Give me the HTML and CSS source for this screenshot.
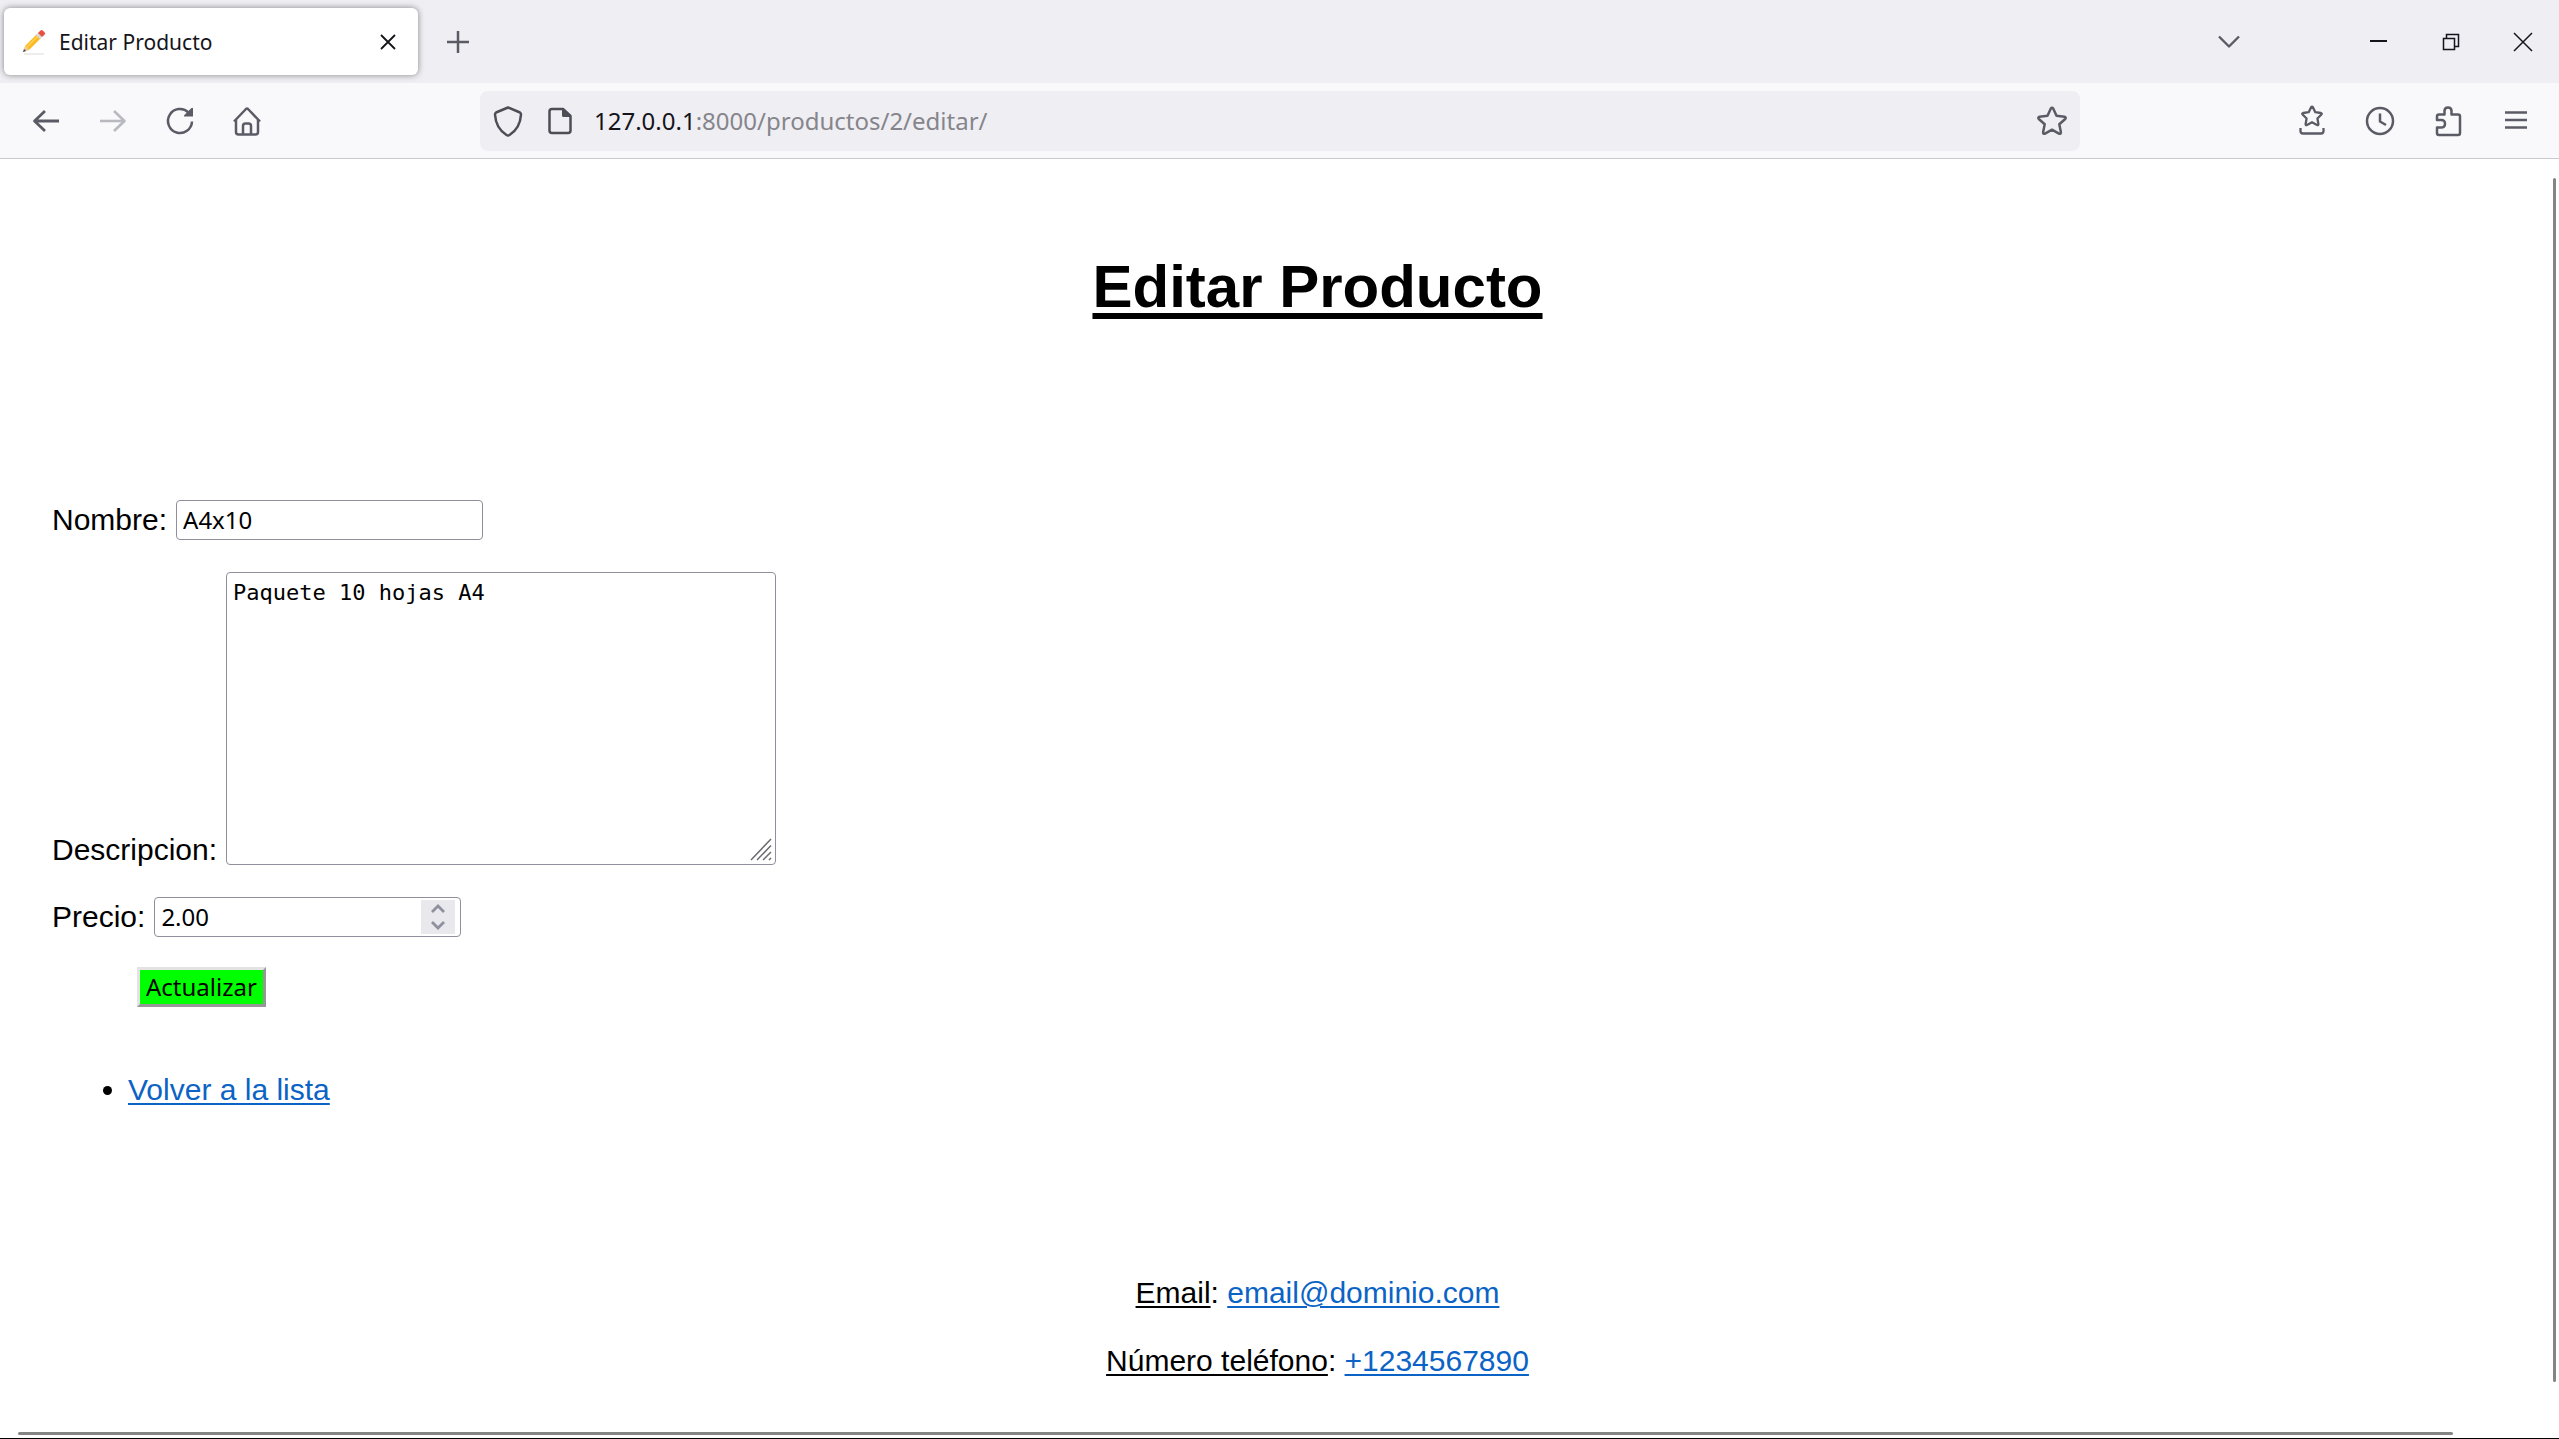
FILE: index.html
```html
<!DOCTYPE html>
<html lang="es">
<head>
<meta charset="utf-8">
<title>Editar Producto</title>
<link rel="stylesheet" href="styles.css">
</head>
<body>
<header class="browser">
  <div class="tabstrip">
    <div class="tab">
      <svg class="favicon" width="24" height="26" viewBox="0 0 24 26">
        <path d="M2 25h20" stroke="#dcdcdc" stroke-width="1"/>
        <path d="M1 23 3 17 7 21z" fill="#e9c79a"/>
        <path d="M1 23l1-3 2 2z" fill="#444"/>
        <path d="M3 17 15 5l4 4L7 21z" fill="#fdb922"/>
        <path d="M4.500 18.500 16.500 6.500" stroke="#ffd45c" stroke-width="1.500"/>
        <path d="M14 6l3-3 4 4-3 3z" fill="#d5dbe0"/>
        <path d="M16 4l2.500-2.500q1-1 2.200 0l2 2q1 1.200 0 2L20 8z" fill="#e8503f"/>
      </svg>
      <span class="tab-title">Editar Producto</span>
      <button class="tab-close" aria-label="Cerrar pestaña"><svg width="16" height="16" viewBox="0 0 16 16"><path d="M1 1l14 14M15 1 1 15" stroke="#15141a" stroke-width="1.800"/></svg></button>
    </div>
    <button class="new-tab" aria-label="Nueva pestaña"><svg class="icon" viewBox="0 0 32 32"><path d="M16 5v22M5 16h22" stroke-width="2.500"/></svg></button>
    <div class="window-controls">
      <button class="list-tabs" aria-label="Listar pestañas"><svg class="icon" viewBox="0 0 32 32"><path d="M6 10.500l10 10 10-10" stroke-width="2.400"/></svg></button>
      <button class="win-button" aria-label="Minimizar"><svg class="icon" viewBox="0 0 32 32"><path d="M7 15h17" stroke-width="2"/></svg></button>
      <button class="win-button" aria-label="Restaurar"><svg class="icon" viewBox="0 0 32 32"><path d="M8.500 12.500h11v11h-11zM11.500 12V8.500h12v12H20" stroke-width="1.500" stroke-linecap="butt" stroke-linejoin="miter"/></svg></button>
      <button class="win-button" aria-label="Cerrar"><svg class="icon" viewBox="0 0 32 32"><path d="M7 7l18 18M25 7 7 25" stroke-width="1.500"/></svg></button>
    </div>
  </div>
  <nav class="toolbar">
    <button class="nav-tool" aria-label="Atrás"><svg class="icon" viewBox="0 0 32 32"><path d="M29 16H4.500M15 6 4.500 16 15 26" stroke-width="2.800"/></svg></button>
    <button class="nav-tool forward" aria-label="Adelante"><svg class="icon" viewBox="0 0 32 32"><path d="M3 16h24.500M17 6l10.500 10L17 26" stroke-width="2.600"/></svg></button>
    <button class="nav-tool" aria-label="Recargar"><svg class="icon" viewBox="0 0 32 32"><path d="M24.500 7.500A12 12 0 1 0 28 16.500"/><path class="solid" d="M29 3.200v8.300h-8.800q-.8-.5 0-1.300l7-7q1.200-.9 1.800 0z"/></svg></button>
    <button class="nav-tool" aria-label="Inicio"><svg class="icon" viewBox="0 0 32 32"><path d="M3 16.500 15 4q1-.9 2 0l12 12.500M5 15v12q0 2.500 2.500 2.500h17q2.500 0 2.500-2.500V15M12 29.500V21q0-2.500 2.500-2.500h3q2.500 0 2.500 2.500v8.500"/></svg></button>
    <div class="urlbar">
      <svg class="icon" viewBox="0 0 32 32"><path d="M16 2.500 28 7.500q1 .5 1 2C28.500 18 25.500 25 17.500 30q-1.500.9-3 0C6.500 25 3.500 18 3 9.500q0-1.500 1-2z"/></svg>
      <svg class="icon" viewBox="0 0 32 32"><path d="M19 4H8q-2.500 0-2.500 2.500v19Q5.500 28 8 28h16q2.500 0 2.500-2.500V11z"/><path class="solid" d="M18 4v6.500q0 1.500 1.500 1.500H27v-1.500L20 4z"/></svg>
      <span class="url"><span class="host">127.0.0.1</span>:8000/productos/2/editar/</span>
      <button class="bookmark" aria-label="Añadir a marcadores"><svg class="icon" viewBox="0 0 32 32"><path d="M14.700 3.800q1.300-1.900 2.600 0l3.200 7 8 1q2 .6.700 2.200l-5.900 5.300 1.600 7.900q0 2.200-2 1.400L16 24.700l-6.900 3.900q-2 .8-2-1.400l1.600-7.900L2.800 14q-1.300-1.600.7-2.200l8-1z"/></svg></button>
    </div>
    <button class="tool" aria-label="Marcadores"><svg class="icon" viewBox="0 0 32 32"><path d="M15.100 2.200q.9-1.300 1.800 0l2.400 5 5.600.8q1.400.4.500 1.500l-4 4 1 5.400q0 1.600-1.400 1L16 17.200l-5 2.700q-1.400.6-1.400-1l1-5.400-4-4q-.9-1.100.5-1.500l5.600-.8zM4.500 23v3q0 2.500 2.500 2.500h18q2.500 0 2.500-2.500v-3" stroke-width="2.300"/></svg></button>
    <button class="tool" aria-label="Historial"><svg class="icon" viewBox="0 0 32 32"><circle cx="16" cy="16" r="13"/><path d="M16 8.500v8l6 3.500"/></svg></button>
    <button class="tool" aria-label="Extensiones"><svg class="icon" viewBox="0 0 32 32"><path d="M12.500 9.500V6q0-3.500 3.500-3.500T19.500 6v3.500H26q2 0 2 2V28q0 2-2 2H7q-2 0-2-2v-5.500h4q4 0 4-3.800T9 15H5v-3.500q0-2 2-2z"/></svg></button>
    <button class="tool" aria-label="Menú"><svg class="icon" viewBox="0 0 32 32"><path d="M5 7.500h22M5 15h22M5 22.500h22"/></svg></button>
  </nav>
</header>
<div class="viewport">
  <div class="page">
    <h1>Editar Producto</h1>
    <form class="product-form">
      <div class="field">
        <label for="nombre">Nombre:</label>
        <input class="text-input" id="nombre" type="text" value="A4x10">
      </div>
      <div class="field field-tall">
        <label for="descripcion">Descripcion:</label>
        <div class="control">
          <textarea id="descripcion">Paquete 10 hojas A4</textarea>
          <svg class="grip" width="22" height="23" viewBox="0 0 22 23"><path d="M1 22 21 1M7 22 21 7.500M13 22l8-8M19 22l2-2" stroke="#6b6b70" stroke-width="1.500"/></svg>
        </div>
      </div>
      <div class="field">
        <label for="precio">Precio:</label>
        <div class="control">
          <input class="text-input" id="precio" type="number" step="0.01" value="2.00">
          <svg class="spinner" width="34" height="34" viewBox="0 0 34 34"><path d="M11 12l6-6 6 6M11 22l6 6 6-6" fill="none" stroke="#8f8f9d" stroke-width="2.800"/></svg>
        </div>
      </div>
      <button class="submit" type="submit">Actualizar</button>
    </form>
    <ul class="links"><li><a href="#lista">Volver a la lista</a></li></ul>
    <footer class="contact">
      <p><u>Email</u>: <a href="mailto:email@dominio.com">email@dominio.com</a></p>
      <p><u>Número teléfono</u>: <a href="tel:+1234567890">+1234567890</a></p>
    </footer>
  </div>
  <div class="scroll-y"></div>
  <div class="scroll-x"></div>
</div>
</body>
</html>
```
FILE: styles.css
```css
* { box-sizing: border-box; }

body {
  margin: 0;
  min-height: 100vh;
  display: flex;
  flex-direction: column;
  overflow: hidden;
  background: #fff;
  color: #000;
  font: 30px/34px "Liberation Sans", Arial, sans-serif;
}

/* Browser window */
.browser {
  font-family: "Noto Sans", "Segoe UI", sans-serif;
  color: #15141a;
  border-bottom: 1px solid #c9c9ce;
}
.browser button {
  display: flex;
  align-items: center;
  justify-content: center;
  padding: 0;
  border: 0;
  background: none;
  color: #5b5b66;
}
.icon {
  flex: none;
  width: 32px;
  height: 32px;
  fill: none;
  stroke: currentColor;
  stroke-width: 2.5;
  stroke-linejoin: round;
}
.icon .solid { fill: currentColor; stroke: none; }

.tabstrip {
  display: flex;
  align-items: center;
  height: 83px;
  padding-left: 4px;
  background: #efeef3;
}
.tab {
  display: flex;
  align-items: center;
  width: 414px;
  height: 67px;
  padding: 0 22px 0 18px;
  border-radius: 6px;
  background: #fff;
  box-shadow: 0 0 6px rgba(0, 0, 0, 0.45);
}
.tab-title { flex: 1; margin-left: 13px; font-size: 21px; }
.browser .new-tab { width: 80px; height: 60px; }
.window-controls { display: flex; margin-left: auto; }
.browser .list-tabs { width: 60px; height: 60px; margin-right: 84px; }
.browser .win-button { width: 72px; height: 60px; color: #15141a; }

.toolbar {
  display: flex;
  align-items: center;
  height: 75px;
  padding: 0 9px 0 12px;
  background: #f9f9fb;
}
.browser .nav-tool { width: 67px; height: 60px; }
.browser .tool { width: 68px; height: 60px; }
.browser .forward { color: #b9b9c0; }
.urlbar {
  flex: 1;
  display: flex;
  align-items: center;
  gap: 20px;
  height: 60px;
  margin: 0 198px 0 200px;
  padding: 0 12px;
  border-radius: 8px;
  background: #efeef3;
  color: #4d4d55;
}
.url { flex: 1; margin-left: -2px; font-size: 24px; color: #85858b; }
.host { color: #15141a; }

/* Page shown in the window */
.viewport {
  flex: 1;
  position: relative;
  overflow: hidden;
  border-bottom: 1px solid #000;
}
.page { margin-right: -24px; padding: 94px 0 0 52px; }

h1 {
  margin: 0 0 179px;
  font-size: 60px;
  line-height: 68px;
  text-align: center;
  text-decoration: underline 6px;
  text-underline-offset: 6px;
}

.product-form {
  display: flex;
  flex-direction: column;
  align-items: flex-start;
  gap: 30px;
}
.field { display: flex; align-items: center; gap: 9px; }
.field-tall { align-items: flex-end; }
.control { position: relative; display: flex; }

.text-input, textarea {
  margin: 0;
  border: 1px solid #8f8f9d;
  border-radius: 4px;
  background: #fff;
  color: #000;
}
.text-input {
  width: 307px;
  height: 40px;
  padding: 1px 6px 2px;
  font: 24px "Noto Sans", "Segoe UI", sans-serif;
  appearance: textfield;
}
.text-input::-webkit-inner-spin-button { appearance: none; }
textarea {
  width: 550px;
  height: 293px;
  margin: 2px 0;
  padding: 6px;
  font: 22px/28px "DejaVu Sans Mono", Consolas, monospace;
  resize: none;
}
.grip { position: absolute; right: 4px; bottom: 6px; }
.spinner { position: absolute; top: 3px; right: 6px; background: #e9e9ed; }

.submit {
  height: 40px;
  margin-left: 85px;
  padding: 0 6px;
  border: 3px solid;
  border-color: #e3e3e3 #979797 #979797 #e3e3e3;
  background: #0f0;
  color: #000;
  font: 24px/34px "Noto Sans", "Segoe UI", sans-serif;
}

a, u { text-decoration: underline 2px; text-underline-offset: 3px; }
a { color: #0b63c5; }

.links { margin: 66px 0 0; padding-left: 76px; }
.contact {
  display: flex;
  flex-direction: column;
  gap: 34px;
  margin-top: 169px;
  text-align: center;
}
.contact p { margin: 0; }

.scroll-y, .scroll-x { position: absolute; border-radius: 2px; background: #858585; }
.scroll-y { top: 19px; right: 3px; bottom: 56px; width: 3px; }
.scroll-x { left: 18px; right: 106px; bottom: 3px; height: 3px; }
```
